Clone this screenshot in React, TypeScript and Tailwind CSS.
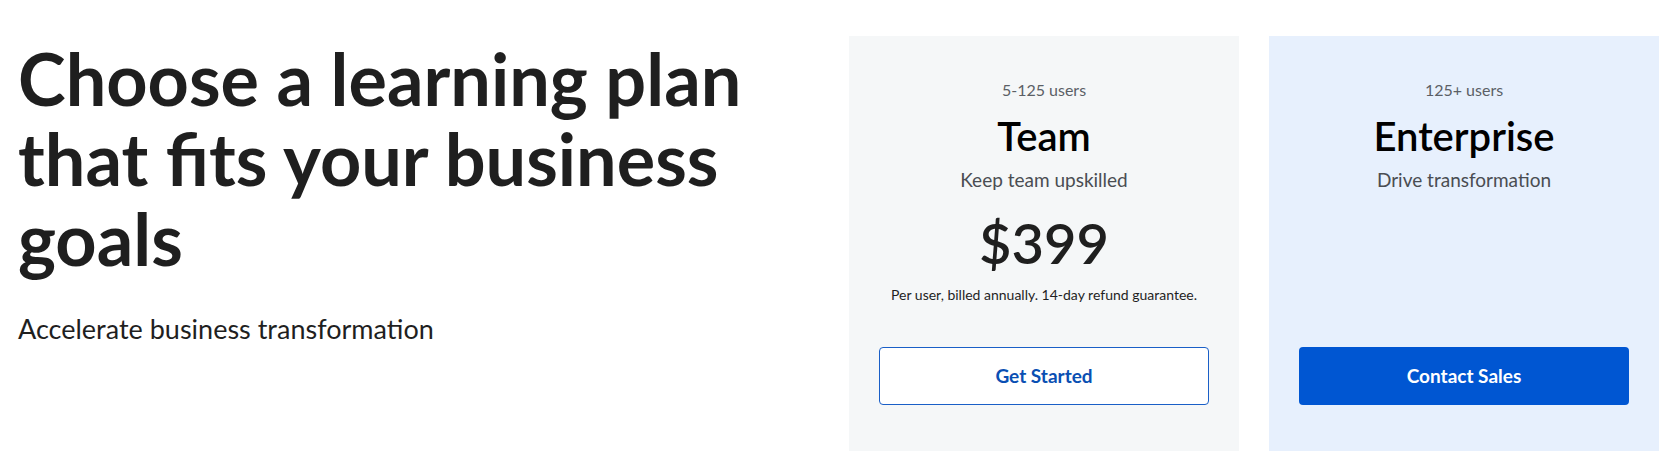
const sans = { fontFamily: "Lato, 'Noto Sans', sans-serif" };

type PlanProps = {
  users: string;
  name: string;
  tagline: string;
  price?: string;
  note?: string;
  cta: string;
  primary?: boolean;
};

function PlanCard({ users, name, tagline, price, note, cta, primary }: PlanProps) {
  return (
    <div
      className={`w-[390px] h-[415px] flex flex-col items-center px-[30px] ${
        primary ? "bg-[#e7f0fd]" : "bg-[#f5f7f8]"
      }`}
    >
      <div className="h-[269px] w-full flex flex-col items-center pt-[42px] text-center">
        <p className="text-[16px] leading-[24px] text-[#5b5f66]">{users}</p>
        <h2 className="mt-[10px] text-[40px] leading-[48px] font-semibold text-black">{name}</h2>
        <p className="mt-[8px] text-[19px] leading-[24px] text-[#4a4d52]">{tagline}</p>
        {price && (
          <p className="mt-[19px] text-[56px] leading-[64px] font-semibold text-[#1f1f1f]">{price}</p>
        )}
        {note && <p className="mt-[10px] text-[14px] leading-[20px] text-[#1f1f1f]">{note}</p>}
      </div>
      <button
        className={`mt-[42px] w-[330px] h-[58px] rounded-[4px] text-[19px] font-bold ${
          primary
            ? "bg-[#0056d2] text-white"
            : "bg-white border border-[#1a5fc7] text-[#0a4fb3]"
        }`}
      >
        {cta}
      </button>
    </div>
  );
}

export default function App() {
  return (
    <div className="w-[1664px] h-[451px] overflow-hidden bg-white flex" style={sans}>
      <div className="flex-1 pl-[18px] pt-[38px]">
        <h1 className="text-[72px] leading-[80px] font-bold text-[#1f1f1f] max-w-[790px]">
          Choose a learning plan that fits your business goals
        </h1>
        <p className="mt-[33px] text-[27px] leading-[36px] text-[#1f1f1f]">
          Accelerate business transformation
        </p>
      </div>
      <div className="flex gap-[30px] pt-[36px] pr-[5px]">
        <PlanCard
          users="5-125 users"
          name="Team"
          tagline="Keep team upskilled"
          price="$399"
          note="Per user, billed annually. 14-day refund guarantee."
          cta="Get Started"
        />
        <PlanCard
          users="125+ users"
          name="Enterprise"
          tagline="Drive transformation"
          cta="Contact Sales"
          primary
        />
      </div>
    </div>
  );
}
